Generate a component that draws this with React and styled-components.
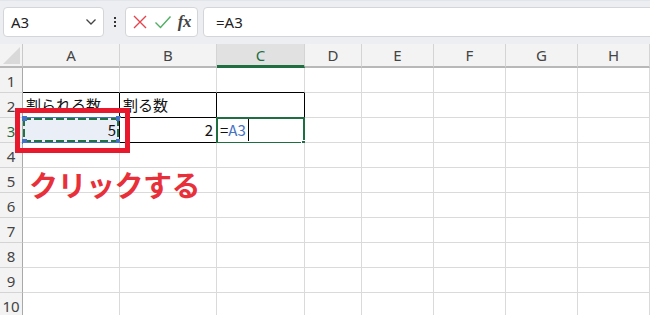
import React from 'react'
import styled, { createGlobalStyle } from 'styled-components'

const Global = createGlobalStyle`
  html, body {
    margin: 0;
    padding: 0;
    background: #ffffff;
    overflow: hidden;
  }
  body {
    font-family: "Noto Sans", "Noto Sans CJK JP", sans-serif;
  }
`

const Page = styled.div`
  position: relative;
  width: 650px;
  height: 315px;
  overflow: hidden;
`

const FormulaBar = styled.div`
  display: flex;
  align-items: center;
  height: 44px;
  padding: 0 0 2px 3px;
  box-sizing: border-box;
  background: #eceef1;
  border-top: 1px solid #e2e5e9;
`

const Box = styled.div`
  display: flex;
  align-items: center;
  height: 30px;
  box-sizing: border-box;
  background: #ffffff;
  border: 1px solid #d3d5d8;
  border-radius: 4px;
`

const NameBox = styled(Box)`
  width: 101px;
  padding: 0 6px 0 7px;
  justify-content: space-between;
  font-size: 15px;
  color: #222;
`

const Dots = styled.div`
  width: 21px;
  display: flex;
  flex-direction: column;
  align-items: center;
  gap: 2px;
  span {
    width: 2px;
    height: 2px;
    background: #333;
  }
`

const FxBox = styled(Box)`
  width: 73px;
  padding: 0 4px 0 6px;
  justify-content: space-between;
`

const FxText = styled.span`
  font-family: "Liberation Serif", "DejaVu Serif", serif;
  font-style: italic;
  font-weight: bold;
  font-size: 17px;
  color: #444;
  letter-spacing: -0.5px;
  padding-right: 2px;
`

const Input = styled(Box)`
  flex: 1;
  margin-left: 5px;
  margin-right: -10px;
  padding-left: 12px;
  font-size: 15px;
  color: #222;
`

const Sheet = styled.div`
  display: grid;
  grid-template-columns: 23px 97px 97px 88px 57px 72px 72px 72px 72px;
  grid-template-rows: 24px repeat(10, 25px);
`

const Corner = styled.div`
  background: #f3f3f3;
  border-right: 1px solid #c9c9c9;
  border-bottom: 2px solid #b8b8b8;
  box-sizing: border-box;
  display: flex;
  align-items: flex-end;
  justify-content: flex-end;
  padding: 0 2px 2px 0;
`

const ColHead = styled.div`
  display: flex;
  align-items: center;
  justify-content: center;
  box-sizing: border-box;
  font-size: 15px;
  background: ${p => (p.$active ? '#e1e1e1' : '#f3f3f3')};
  color: ${p => (p.$active ? '#1e6e42' : '#444')};
  border-right: 1px solid #d4d4d4;
  border-bottom: ${p => (p.$active ? '3px solid #1e6e42' : '2px solid #b8b8b8')};
`

const RowHead = styled.div`
  display: flex;
  align-items: center;
  justify-content: center;
  box-sizing: border-box;
  font-size: 15px;
  padding-top: 1px;
  background: #f3f3f3;
  color: ${p => (p.$active ? '#1e6e42' : '#444')};
  border-right: 1px solid #a9a9a9;
  border-bottom: 1px solid #d4d4d4;
`

const Cell = styled.div`
  position: relative;
  display: flex;
  align-items: flex-end;
  justify-content: ${p => (p.$right ? 'flex-end' : 'flex-start')};
  box-sizing: border-box;
  padding: 0 3px 2px 3px;
  font-family: "Noto Sans CJK JP", sans-serif;
  font-size: 15px;
  line-height: 20px;
  color: #111;
  white-space: nowrap;
  background: ${p => (p.$marked ? '#e9eef7' : '#ffffff')};
  border-right: 1px solid ${p => (p.$boxR ? '#000' : '#dadada')};
  border-bottom: 1px solid ${p => (p.$boxB ? '#000' : '#dadada')};
`

const Ref = styled.span`
  color: #4472c4;
`

const Caret = styled.span`
  position: absolute;
  left: 31px;
  top: 1px;
  bottom: 1px;
  width: 1px;
  background: #000;
`

const dashH = 'repeating-linear-gradient(90deg, #217346 0 8px, transparent 8px 11px)'
const dashV = 'repeating-linear-gradient(180deg, #217346 0 8px, transparent 8px 11px)'

const Marquee = styled.div`
  position: absolute;
  inset: 0;
  pointer-events: none;
  background:
    ${dashH} left top / 100% 2px no-repeat,
    ${dashH} left bottom / 100% 2px no-repeat,
    ${dashV} left top / 2px 100% no-repeat,
    ${dashV} right top / 2px 100% no-repeat;
  box-shadow: 0 -1px 0 #4472c4, 0 1px 0 #4472c4;
`

const Handle = styled.span`
  position: absolute;
  width: 5px;
  height: 5px;
  background: #4472c4;
  ${p => (p.$t ? 'top: -2px;' : 'bottom: -2px;')}
  ${p => (p.$l ? 'left: -1px;' : 'right: -2px;')}
`

const Active = styled.div`
  position: absolute;
  inset: -1px -1px -2px -1px;
  border: 2px solid #1e6e42;
  pointer-events: none;
  &::after {
    content: '';
    position: absolute;
    right: -4px;
    bottom: -4px;
    width: 5px;
    height: 5px;
    background: #1e6e42;
    border-left: 1px solid #fff;
    border-top: 1px solid #fff;
  }
`

const Callout = styled.div`
  position: absolute;
  left: 15px;
  top: 108px;
  width: 115px;
  height: 45px;
  box-sizing: border-box;
  border: 5px solid #e8192c;
`

const Label = styled.div`
  position: absolute;
  left: 29px;
  top: 164px;
  font-family: "Noto Sans CJK JP", sans-serif;
  font-weight: 700;
  font-size: 29px;
  line-height: 40px;
  letter-spacing: -0.5px;
  color: #e8303a;
`

const cols = ['A', 'B', 'C', 'D', 'E', 'F', 'G', 'H']

const content = {
  '2A': { text: '割られる数' },
  '2B': { text: '割る数' },
  '3A': { text: '5', right: true, marked: true },
  '3B': { text: '2', right: true },
  '3C': { active: true },
}

const inTable = (r, c) => r >= 1 && r <= 3 && c < 3

export default function App() {
  const rows = Array.from({ length: 10 }, (_, i) => i + 1)
  return (
    <Page>
      <Global />
      <FormulaBar>
        <NameBox>
          <span>A3</span>
          <svg width="12" height="8" viewBox="0 0 12 8">
            <path d="M1.5 1.5 L6 6 L10.5 1.5" fill="none" stroke="#444" strokeWidth="1.3" />
          </svg>
        </NameBox>
        <Dots>
          <span />
          <span />
          <span />
        </Dots>
        <FxBox>
          <svg width="16" height="16" viewBox="0 0 16 16">
            <path d="M2 2 L14 14 M14 2 L2 14" stroke="#e0464c" strokeWidth="1.4" fill="none" />
          </svg>
          <svg width="18" height="16" viewBox="0 0 18 16">
            <path d="M1.5 8.5 L6.5 13.5 L16.5 2.5" stroke="#4faf62" strokeWidth="1.4" fill="none" />
          </svg>
          <FxText>fx</FxText>
        </FxBox>
        <Input>=A3</Input>
      </FormulaBar>
      <Sheet>
        <Corner>
          <svg width="17" height="17" viewBox="0 0 17 17">
            <path d="M17 0 L17 17 L0 17 Z" fill="#d9d9d9" />
          </svg>
        </Corner>
        {cols.map(c => (
          <ColHead key={c} $active={c === 'C'}>
            {c}
          </ColHead>
        ))}
        {rows.map(r => (
          <React.Fragment key={r}>
            <RowHead $active={r === 3}>{r}</RowHead>
            {cols.map((c, ci) => {
              const info = content[`${r}${c}`] || {}
              return (
                <Cell
                  key={c}
                  $right={info.right}
                  $marked={info.marked}
                  $boxR={r >= 2 && r <= 3 && ci < 3}
                  $boxB={inTable(r, ci)}
                >
                  {info.text}
                  {info.marked && (
                    <Marquee>
                      <Handle $t $l />
                      <Handle $t />
                      <Handle $l />
                      <Handle />
                    </Marquee>
                  )}
                  {info.active && (
                    <>
                      <span>
                        =<Ref>A3</Ref>
                      </span>
                      <Caret />
                      <Active />
                    </>
                  )}
                </Cell>
              )
            })}
          </React.Fragment>
        ))}
      </Sheet>
      <Callout />
      <Label>クリックする</Label>
    </Page>
  )
}
